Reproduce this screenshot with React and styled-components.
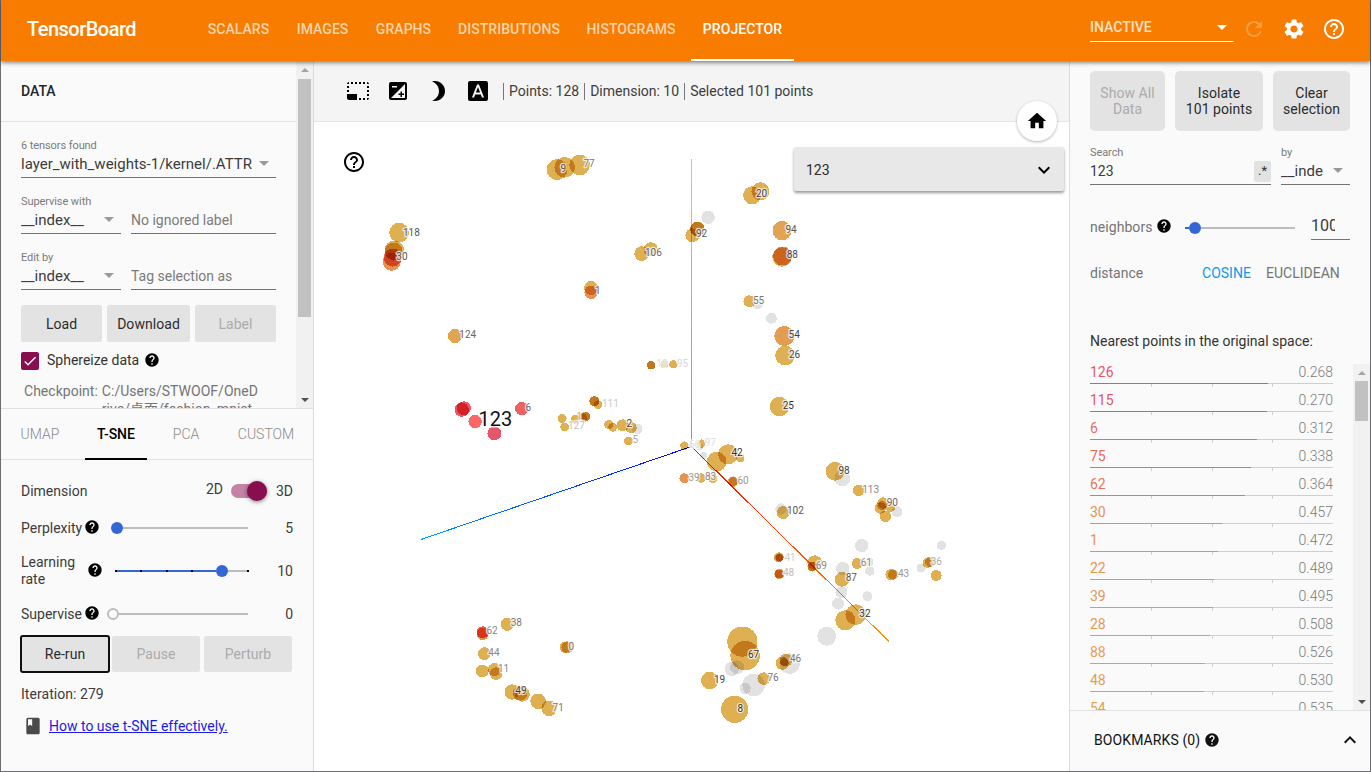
import React from 'react';
import styled, { createGlobalStyle } from 'styled-components';
import {
  MdPhotoSizeSelectSmall, MdExposure, MdBrightness3, MdFontDownload, MdHelp, MdHelpOutline,
  MdSettings, MdRefresh, MdExpandMore, MdExpandLess, MdBook, MdHome, MdCheck,
} from 'react-icons/md';

const GlobalStyle = createGlobalStyle`
  * { box-sizing: border-box; }
  body { margin: 0; overflow: hidden; background: #fff; font-family: Roboto, "Noto Sans CJK SC", sans-serif; font-size: 14px; color: #3c3c3c; }
  svg { display: block; flex: none; }
`;

const Window = styled.div`
  width: 1371px; height: 772px; display: flex; flex-direction: column;
  border: solid #6e6e72; border-width: 0 1px 1px 1px;
`;
const Header = styled.header`
  height: 61px; flex: none; background: #f77c00; display: flex; position: relative; z-index: 5;
  box-shadow: 0 2px 4px rgba(0,0,0,.45); color: #fff; padding-left: 26px;
`;
const Brand = styled.div`
  width: 167px; font-size: 20px; font-weight: 500; line-height: 59px; letter-spacing: -0.52px;
`;
const Nav = styled.nav`display: flex; flex: 1;`;
const NavTab = styled.div`
  width: ${p => p.$w}px; text-align: center; line-height: 59px; font-weight: 500; white-space: nowrap;
  letter-spacing: 0.05px; margin-left: ${p => (p.$active ? 2 : 0)}px;
  color: ${p => (p.$active ? '#fff' : '#fdd5ae')};
  border-bottom: 2px solid ${p => (p.$active ? '#fff' : 'transparent')};
`;
const HeaderRight = styled.div`display: flex; width: 280px; flex: none; padding-top: 16px;`;
const ReloadSelect = styled.div`
  width: 144px; height: 26px; border-bottom: 1px solid #fff; display: flex; justify-content: space-between;
  align-items: center; font-weight: 500; padding: 0 7px 3px 0; color: #ffe1c2; margin-right: 8px;
`;
const Caret = styled.i`
  width: 0; height: 0; border: 5px solid transparent; border-bottom: 0; flex: none;
  border-top-color: ${p => p.$c || '#999'};
`;
const HeaderIcon = styled.div`
  margin: 1px 16px 0 0; height: 24px; opacity: ${p => (p.$dim ? 0.25 : 1)};
`;

const Body = styled.div`flex: 1; display: flex; min-height: 0;`;
const LeftPane = styled.aside`
  width: 313px; flex: none; background: #fafafa; border-right: 1px solid #dcdcdc; display: flex; flex-direction: column;
`;
const DataArea = styled.div`height: 348px; flex: none; display: flex; border-bottom: 1px solid #e0e0e0; overflow: hidden;`;
const DataContent = styled.div`flex: 1; overflow: hidden;`;
const DataTitle = styled.div`
  height: 61px; border-bottom: 1px solid #e0e0e0; line-height: 61px; padding-left: 20px; font-weight: 500; color: #262626;
`;
const DataForm = styled.div`padding: 17px 20px 0 20px;`;
const FieldLabel = styled.div`font-size: 11px; line-height: 14px; height: 14px; color: #7a7a7a; letter-spacing: -0.08px;`;
const Field = styled.div`
  height: 25px; border-bottom: 1px solid #737373; display: flex; align-items: center; justify-content: space-between;
  font-size: ${p => p.$fs || 15}px; white-space: nowrap; overflow: hidden; padding: 0 ${p => p.$pr ?? 7}px 3px 0;
  width: ${p => p.$w}px; color: ${p => (p.$muted ? '#7b7b7b' : '#3c3c3c')}; margin-bottom: ${p => p.$mb || 0}px;
`;
const FieldRow = styled.div`display: flex; gap: 10px; align-items: flex-end; margin-bottom: ${p => p.$mb}px;`;
const ButtonRow = styled.div`display: flex; gap: ${p => p.$gap}px; margin-top: ${p => p.$mt || 0}px;`;
const GreyButton = styled.div`
  background: #e3e3e3; border-radius: ${p => p.$r || 2}px; width: ${p => p.$w}px; height: ${p => p.$h}px; flex: none;
  display: flex; align-items: center; justify-content: center; text-align: center; line-height: 16px; white-space: pre-line;
  letter-spacing: 0.05px; color: ${p => (p.$off ? '#ababab' : '#2c2c2c')};
  outline: ${p => (p.$focus ? '2px solid #101010' : 'none')}; outline-offset: -1px; margin-right: ${p => (p.$focus ? -1 : 0)}px;
`;
const CheckRow = styled.div`display: flex; align-items: center; margin-top: 9px; height: 20px; color: #333;`;
const CheckBox = styled.div`
  width: 18px; height: 18px; border-radius: 2px; background: #880e4f; color: #fff; margin-right: 8px;
  display: flex; align-items: center; justify-content: center;
`;
const CheckLabel = styled.span`margin-right: 5px; line-height: 18px; padding-bottom: 2px;`;
const Checkpoint = styled.div`
  display: flex; color: #757575; margin: 11px 0 0 3px; line-height: 18px; gap: 4px; letter-spacing: 0.02px;
`;

const ScrollTrack = styled.div`
  width: 17px; flex: none; background: #f1f1f1; display: flex; flex-direction: column; align-items: center;
  padding: 7px 0 6px;
`;
const Arrow = styled.i`
  width: 0; height: 0; border: 4px solid transparent;
  ${p => (p.$down ? 'border-bottom: 0; border-top-color: #505050; margin-top: auto;' : 'border-top: 0; border-bottom-color: #a3a3a3;')}
`;
const Thumb = styled.div`width: 13px; height: ${p => p.$h}px; background: #c1c1c1; margin-top: ${p => p.$mt}px;`;

const Tabs = styled.div`height: 51px; flex: none; display: flex; border-bottom: 1px solid #e0e0e0;`;
const Tab = styled.div`
  width: ${p => p.$w}px; height: 51px; text-align: center; line-height: 51px; margin-left: ${p => p.$ml || 0}px;
  font-weight: ${p => (p.$active ? 500 : 300)}; color: ${p => (p.$active ? '#000' : '#8a8a8a')};
  border-bottom: 2px solid ${p => (p.$active ? '#000' : 'transparent')};
`;
const Settings = styled.div`padding: 10px 20px 0 20px;`;
const SettingRow = styled.div`
  display: flex; align-items: center; height: ${p => p.$h}px;
`;
const SettingName = styled.div`width: ${p => p.$w}px; line-height: 17px; white-space: nowrap; flex: none;`;
const HelpDot = styled.span`color: #000; margin: ${p => p.$m || '0'}; display: block;`;
const SettingValue = styled.div`width: 45px; text-align: right;`;
const TwoD = styled.span`padding-bottom: 5px;`;
const Slider = styled.div`
  flex: none; width: ${p => p.$w}px; height: 12px; margin: 0 0 ${p => p.$mb || 0}px ${p => p.$ml}px; display: flex; align-items: center;
`;
const Rail = styled.div`
  height: 2px; width: ${p => p.$w}px; display: flex; justify-content: space-between;
  background: ${p => (p.$on ? '#3367d6' : '#bdbdbd')};
`;
const Tick = styled.i`width: 2px; height: 2px; background: #000;`;
const Knob = styled.div`
  width: 12px; height: 12px; border-radius: 50%; flex: none;
  background: ${p => (p.$empty ? '#fafafa' : '#3367d6')}; border: ${p => (p.$empty ? '2px solid #bdbdbd' : '0')};
`;
const Toggle = styled.div`
  width: 36px; height: 14px; border-radius: 7px; background: #c583a5; margin: 0 9px 0 8px;
  display: flex; align-items: center; justify-content: flex-end;
`;
const ToggleKnob = styled.div`
  width: 20px; height: 20px; border-radius: 50%; background: #880e4f; box-shadow: 0 1px 4px rgba(0,0,0,.5); flex: none;
`;
const Iteration = styled.div`margin-top: 14px; line-height: 16px; letter-spacing: 0.05px;`;
const HowTo = styled.div`
  display: flex; align-items: center; margin: 14px 0 0 2px; gap: 6px; color: #4a4a4a;
  a { color: #1a1ae8; text-decoration: underline; }
`;

const Center = styled.main`width: 755px; flex: none; display: flex; flex-direction: column; position: relative;`;
const Toolbar = styled.div`
  height: 61px; flex: none; background: #f4f4f4; border-bottom: 1px solid #e6e6e6; display: flex; align-items: center;
  padding-left: 32px; color: #000;
`;
const ToolIcon = styled.div`margin-right: ${p => (p.$last ? 13 : 16)}px;`;
const Stat = styled.div`
  border-left: 1px solid #777; height: 17px; line-height: 17px; padding: 0 5px; color: #3c3c3c; white-space: nowrap;
`;
const Plot = styled.div`flex: 1; min-height: 0; background: #fff;`;
const HomeButton = styled.div`
  position: absolute; left: 703px; top: 40px; width: 40px; height: 40px; border-radius: 50%; background: #fff; color: #000;
  display: flex; align-items: center; justify-content: center; box-shadow: 0 1px 3px rgba(0,0,0,.3);
`;
const PlotHelp = styled.div`position: absolute; left: 28px; top: 89px; color: #000;`;
const MetadataCard = styled.div`
  position: absolute; left: 480px; top: 86px; width: 270px; height: 44px; background: #e8e8e8; border-radius: 2px;
  box-shadow: 0 2px 3px rgba(0,0,0,.4); display: flex; align-items: center; justify-content: space-between; padding: 2px 8px 0 12px;
  color: #2c2c2c;
`;

const RightPane = styled.aside`
  flex: 1; background: #fafafa; border-left: 1px solid #dcdcdc; display: flex; flex-direction: column; min-width: 0;
`;
const Inspector = styled.div`height: 272px; flex: none; padding: 10px 20px 0 20px;`;
const SearchRow = styled.div`display: flex; gap: 10px; margin-top: 15px;`;
const RegexButton = styled.div`
  width: 17px; height: 21px; background: #e2e2e2; border-radius: 2px; text-align: center; line-height: 20px; font-size: 13px; color: #333; margin-bottom: -2px;
`;
const NeighborRow = styled.div`display: flex; align-items: flex-end; margin-top: 29px; height: 26px; color: #757575;`;
const NeighborName = styled.div`width: 66px; line-height: 25px; letter-spacing: 0.06px;`;
const NeighborInput = styled.div`
  width: 39px; margin-left: 16px; height: 26px; border-bottom: 1px solid #737373; font-size: 16px; line-height: 24px; color: #3c3c3c;
`;
const Clip = styled.div`width: 24px; overflow: hidden;`;
const DistanceRow = styled.div`display: flex; margin-top: 25px; line-height: 17px; color: #757575;`;
const DistanceName = styled.div`width: 112px; flex: none;`;
const Metric = styled.div`color: ${p => (p.$on ? '#0a9af5' : '#757575')}; margin-right: ${p => (p.$on ? 15 : 0)}px; letter-spacing: 0.02px;`;
const NearestTitle = styled.div`height: 31px; flex: none; padding-left: 20px; line-height: 17px; color: #333;`;
const NearestArea = styled.div`height: 347px; flex: none; display: flex; border-bottom: 1px solid #e0e0e0;`;
const NearestList = styled.div`width: 283px; height: 346px; overflow: hidden; padding: 0 20px;`;
const NearestItem = styled.div`height: 28px;`;
const NearestText = styled.div`display: flex; justify-content: space-between; height: 19px; line-height: 16px; color: ${p => p.$c};`;
const Distance = styled.span`color: #7b7b7b; font-weight: 300; letter-spacing: 0.02px;`;
const NearestBar = styled.div`height: 1px; background: #cfcfcf;`;
const NearestFill = styled.div`height: 1px; background: ${p => p.$c};`;
const NearestTicks = styled.div`display: flex; justify-content: space-between; width: 183px; padding-left: 61px;`;
const NearestTick = styled.i`width: 1px; height: 3px; background: #cfcfcf;`;
const Bookmarks = styled.div`
  flex: 1; display: flex; align-items: center; padding: 0 8px 2px 24px; color: #111;
`;
const BookmarkTitle = styled.span`letter-spacing: 0.1px; margin-right: 4px;`;
const Spacer = styled.div`flex: 1;`;

const Y = '#dfb052', G = '#e2e2e2', O = '#e79252', A = '#e1a552';
// x, y, radius, colour
const points = [
  [556.7, 169.3, 10.4, Y], [564.3, 167, 10.3, Y], [579.3, 164.7, 10.3, Y], [398.7, 232.3, 9.8, Y],
  [394, 250, 9.7, Y], [393.3, 251.3, 9, Y], [392.3, 257.3, 9, '#e8745c'], [391.3, 261.5, 9, O],
  [641.3, 253.3, 7.4, Y], [650.3, 249, 7.1, Y], [590.7, 287.7, 7, Y], [590.7, 292, 6.7, O],
  [751.7, 195, 9, Y], [760, 191, 9, Y], [707.7, 217, 6.7, G], [692, 235, 7, Y], [697, 228.7, 7.3, Y], [697, 228.7, 7.2, Y],
  [781.7, 230.3, 9.6, A], [781.7, 256.7, 9.7, Y], [782.2, 255.7, 9.5, O], [749, 301, 6, Y], [757.3, 303.6, 5.3, G], [771, 318, 5.4, G],
  [784, 335.7, 10, '#e39d52'], [784.7, 355.3, 9.8, Y], [454.7, 335.7, 7.1, A],
  [461.3, 409.3, 7.2, '#e4566a'], [463.5, 408, 7, '#ef5a63'], [474.7, 421.3, 6.7, '#ff6666'], [494, 433, 7, '#e4566a'], [521.3, 408.3, 6.6, '#ee6163'],
  [650.7, 365, 4.2, Y], [650.7, 365, 4.1, Y], [664, 364, 4, Y], [664.5, 364, 3, '#eedfc0'], [673, 364, 4.2, Y],
  [594, 401, 5.1, Y], [594, 401, 5, Y], [597.7, 404.3, 4.3, Y], [561.7, 418.3, 4.5, Y], [564.3, 426.7, 4.4, Y],
  [575, 419, 4.6, Y], [582, 417.7, 4.8, Y], [585.3, 416.3, 4.8, Y], [585.6, 416.3, 4.3, Y], [608.3, 424.3, 4.5, Y], [612.3, 427, 4.4, Y],
  [622.3, 425, 6, Y], [630.7, 427.3, 5.6, Y], [636.7, 428.7, 5.2, G], [628, 440.7, 4.5, Y],
  [684, 445.3, 4.2, Y], [701, 443.3, 4.2, Y], [699.3, 446.7, 3.5, G], [703.3, 455, 3.4, G],
  [716.3, 461.3, 9.8, Y], [727.7, 454, 10, Y], [740, 457.7, 4.2, Y], [684, 478, 5, O], [701, 477.7, 4.7, Y], [712.3, 478, 4.7, Y],
  [732.7, 481.3, 5.2, Y], [732.7, 481.3, 4.6, Y], [779, 406.3, 9.7, Y], [834.7, 471, 9.4, Y], [842, 478, 8, G], [858.3, 490, 5.8, Y],
  [882.7, 502.7, 5.7, Y], [880, 507.7, 5.7, Y], [881.5, 505.3, 4.6, Y], [890, 506.7, 5, Y], [885, 516, 5.8, Y], [896.7, 511.3, 5.4, G],
  [780.7, 508.7, 5.7, G], [782.7, 512.3, 6.4, Y], [778.3, 557, 5, Y], [779, 557.3, 4.2, Y], [779, 557.3, 3.6, O],
  [779, 573.7, 5, Y], [778.6, 573.7, 4.5, '#e3803f'], [814.3, 562.3, 7.3, Y], [812, 566.3, 5, Y], [811.7, 566.3, 4.4, Y],
  [861.3, 545.3, 6.7, G], [842.3, 568.3, 6.7, G], [868.3, 561.7, 4.7, G], [869.3, 570.7, 4.7, G], [841, 592, 6, G], [837.7, 603.3, 6, G],
  [867, 596, 5, G], [941, 545, 4.6, G], [920.7, 567.7, 4.6, G], [841.7, 579, 7.4, Y], [856.7, 563.3, 5.5, Y],
  [890.7, 574.3, 5.7, Y], [892.7, 574.3, 5, Y], [927.3, 562.3, 5.2, Y], [929.7, 561.7, 5, Y], [935.7, 575.3, 5.5, Y],
  [845, 620, 10.1, Y], [855.3, 614.3, 10.3, Y], [507, 624, 6.6, Y], [482.3, 632, 6, '#e8604a'], [482.3, 633.7, 6, O],
  [484, 653.3, 6.4, Y], [482, 670.7, 6.4, Y], [494, 669.3, 6.5, Y], [495.7, 673.3, 6.3, Y],
  [511.7, 691.7, 7.6, Y], [519.7, 693, 7.3, Y], [522, 694, 7.4, Y], [537.7, 701, 7.8, Y], [548.7, 708, 7.8, Y],
  [564.7, 647, 5.6, Y], [567, 647, 6, Y], [742, 641.3, 15.1, Y], [744.7, 655.3, 14.7, Y],
  [731.3, 668.7, 7.2, G], [736.7, 667, 7, G], [753.3, 684.7, 11.3, G], [744.7, 688, 5.6, G], [789.3, 663.3, 10.3, G], [826.3, 636, 9.4, G],
  [763.3, 678.3, 6.3, Y], [781.7, 663, 6.5, Y], [785.7, 659.7, 6.5, Y], [784, 662, 4.2, Y], [709.3, 680.3, 8.7, Y], [734.3, 709, 13.6, Y],
];
// text, left, baseline, colour
const labels = [
  ['9', 560.5, 172, '#555'], ['77', 583.5, 167, '#777'], ['118', 403, 235.5, '#555'], ['30', 396.3, 259.7, '#555'],
  ['106', 645, 255.7, '#666'], ['1', 595, 293.7, '#666'], ['20', 756, 197, '#444'], ['92', 696, 236.5, '#555'],
  ['94', 785.5, 232.9, '#555'], ['88', 786.7, 258, '#444'], ['55', 753, 304, '#777'], ['54', 788.6, 338.2, '#444'],
  ['26', 789, 358, '#444'], ['124', 459.3, 338, '#666'], ['6', 525.4, 411, '#666'], ['10', 656.3, 367, '#ddd'],
  ['95', 677, 367, '#d8d8d8'], ['111', 602, 407, '#c8c8c8'], ['1', 576.5, 420, '#d9a860'], ['127', 568, 429, '#c4c4c4'],
  ['2', 626.6, 427, '#444'], ['5', 632.6, 443, '#aaa'], ['66', 689, 447.5, '#ddd'], ['97', 704.7, 446, '#ddd'],
  ['42', 731.4, 456, '#333'], ['39', 688.5, 481, '#999'], ['83', 705, 480, '#888'], ['60', 737.5, 484.3, '#999'],
  ['25', 782.7, 409, '#333'], ['98', 838.5, 474, '#444'], ['113', 862.2, 493, '#888'], ['90', 886.7, 506, '#666'],
  ['102', 787, 514, '#555'], ['41', 784.4, 560.5, '#ccc'], ['48', 783, 576, '#bbb'], ['69', 815.7, 569, '#888'],
  ['87', 845.7, 581.3, '#555'], ['61', 860.7, 566, '#888'], ['43', 898, 577, '#999'], ['36', 930.7, 565, '#aaa'],
  ['32', 859.3, 617.3, '#333'], ['38', 510.7, 626, '#777'], ['62', 486.4, 634, '#888'], ['44', 488.3, 656, '#888'],
  ['11', 498, 672.3, '#888'], ['49', 515.3, 694, '#444'], ['71', 552.6, 711, '#777'], ['0', 568.4, 650, '#777'],
  ['67', 748, 658, '#333'], ['76', 767.4, 681, '#777'], ['46', 790, 662, '#777'], ['19', 714, 683, '#444'], ['8', 737.6, 712.3, '#333'],
];

// label, distance, bar width, colour
const nearest = [
  ['126', '0.268', 178, '#e4566a'], ['115', '0.270', 177, '#e4566a'], ['6', '0.312', 167, '#ec6a62'], ['75', '0.338', 161, '#ea6a5c'],
  ['62', '0.364', 155, '#e97657'], ['30', '0.457', 132, '#e68f55'], ['1', '0.472', 128, '#e69255'], ['22', '0.489', 124, '#e59655'],
  ['39', '0.495', 123, '#e59755'], ['28', '0.508', 120, '#e49a54'], ['88', '0.526', 115, '#e39d54'], ['48', '0.530', 114, '#e39e54'],
  ['54', '0.535', 113, '#e39f54'],
];

const navTabs = [
  ['SCALARS', 89], ['IMAGES', 79], ['GRAPHS', 83], ['DISTRIBUTIONS', 128], ['HISTOGRAMS', 116], ['PROJECTOR', 103],
];

const Dot = styled.circle`mix-blend-mode: multiply; shape-rendering: crispEdges;`;
const DotLayer = styled.g`isolation: isolate;`;

function ScatterPlot() {
  return (
    <svg width="755" height="649" viewBox="314 122 755 649" fontFamily="Roboto, sans-serif">
      <defs>
        <linearGradient id="ax" gradientUnits="userSpaceOnUse" x1="691" y1="447" x2="889" y2="642"><stop stopColor="#f00" /><stop offset="1" stopColor="#f90" /></linearGradient>
        <linearGradient id="ay" gradientUnits="userSpaceOnUse" x1="691" y1="447" x2="691" y2="159"><stop stopColor="#0f0" /><stop offset="1" stopColor="#9f0" /></linearGradient>
        <linearGradient id="az" gradientUnits="userSpaceOnUse" x1="691" y1="447" x2="421" y2="540"><stop stopColor="#00f" /><stop offset="1" stopColor="#09f" /></linearGradient>
      </defs>
      <DotLayer>
        <rect x="314" y="122" width="755" height="649" fill="#fff" />
        <g shapeRendering="crispEdges">
          <rect x="691" y="159" width="1" height="288" fill="url(#ay)" />
          <path d="M691.5 446.5L889 641.5" stroke="url(#ax)" />
          <path d="M691.5 446.5L421 539.5" stroke="url(#az)" />
        </g>
        {points.map(([x, y, r, c], i) => (
          <Dot key={i} cx={x + 0.4} cy={y + 0.3} r={r} fill={c} />
        ))}
      </DotLayer>
      {labels.map(([t, x, y, c], i) => (
        <text key={i} x={x} y={y} fontSize="10" fill={c} stroke="#fff" strokeOpacity=".75" strokeWidth="2.4" strokeLinejoin="round" paintOrder="stroke">{t}</text>
      ))}
      <text x="478.6" y="426.3" fontSize="20" fill="#111" stroke="#fff" strokeOpacity=".8" strokeWidth="3" paintOrder="stroke">123</text>
    </svg>
  );
}

export default function App() {
  return (
    <Window>
      <GlobalStyle />
      <Header>
        <Brand>TensorBoard</Brand>
        <Nav>
          {navTabs.map(([t, w], i) => <NavTab key={t} $w={w} $active={i === 5}>{t}</NavTab>)}
        </Nav>
        <HeaderRight>
          <ReloadSelect>INACTIVE<Caret $c="#fff" /></ReloadSelect>
          <HeaderIcon $dim><MdRefresh size={24} /></HeaderIcon>
          <HeaderIcon><MdSettings size={24} /></HeaderIcon>
          <HeaderIcon><MdHelpOutline size={24} /></HeaderIcon>
        </HeaderRight>
      </Header>
      <Body>
        <LeftPane>
          <DataArea>
            <DataContent>
              <DataTitle>DATA</DataTitle>
              <DataForm>
                <FieldLabel>6 tensors found</FieldLabel>
                <Field $w={255} $mb={17}>layer_with_weights-1/kernel/.ATTR<Caret /></Field>
                <FieldRow $mb={17}>
                  <div><FieldLabel>Supervise with</FieldLabel><Field $w={100}>__index__<Caret /></Field></div>
                  <Field $w={145} $fs={14} $muted>No ignored label</Field>
                </FieldRow>
                <FieldRow $mb={15}>
                  <div><FieldLabel>Edit by</FieldLabel><Field $w={100}>__index__<Caret /></Field></div>
                  <Field $w={145} $fs={14} $muted>Tag selection as</Field>
                </FieldRow>
                <ButtonRow $gap={5}>
                  <GreyButton $w={81} $h={37}>Load</GreyButton>
                  <GreyButton $w={83} $h={37}>Download</GreyButton>
                  <GreyButton $w={81} $h={37} $off>Label</GreyButton>
                </ButtonRow>
                <CheckRow>
                  <CheckBox><MdCheck size={16} /></CheckBox>
                  <CheckLabel>Sphereize data</CheckLabel>
                  <HelpDot $m="0 0 2px"><MdHelp size={16} /></HelpDot>
                </CheckRow>
                <Checkpoint><span>Checkpoint:</span><span>C:/Users/STWOOF/OneD<br />rive/桌面/fashion_mnist</span></Checkpoint>
              </DataForm>
            </DataContent>
            <ScrollTrack><Arrow /><Thumb $h={238} $mt={7} /><Arrow $down /></ScrollTrack>
          </DataArea>
          <Tabs>
            <Tab $w={78}>UMAP</Tab>
            <Tab $w={62} $ml={6} $active>T-SNE</Tab>
            <Tab $w={78}>PCA</Tab>
            <Tab $w={80} $ml={1}>CUSTOM</Tab>
          </Tabs>
          <Settings>
            <SettingRow $h={42}>
              <SettingName $w={185}>Dimension</SettingName>
              <TwoD>2D</TwoD><Toggle><ToggleKnob /></Toggle><span>3D</span>
            </SettingRow>
            <SettingRow $h={32}>
              <SettingName $w={63}>Perplexity</SettingName>
              <HelpDot $m="0 0 3px"><MdHelp size={16} /></HelpDot>
              <Slider $w={137} $ml={11}><Knob /><Rail $w={125} /></Slider>
              <SettingValue>5</SettingValue>
            </SettingRow>
            <SettingRow $h={54}>
              <SettingName $w={66}>Learning<br />rate</SettingName>
              <HelpDot $m="0 0 3px"><MdHelp size={16} /></HelpDot>
              <Slider $w={134} $ml={12}>
                <Rail $w={101} $on><Tick /><Tick /><Tick /><Tick /><i /></Rail><Knob />
                <Rail $w={21}><i /><Tick /></Rail>
              </Slider>
              <SettingValue>10</SettingValue>
            </SettingRow>
            <SettingRow $h={32}>
              <SettingName $w={63}>Supervise</SettingName>
              <HelpDot $m="0 0 3px"><MdHelp size={16} /></HelpDot>
              <Slider $w={141} $ml={7}><Knob $empty /><Rail $w={129} /></Slider>
              <SettingValue>0</SettingValue>
            </SettingRow>
            <ButtonRow $gap={4} $mt={6}>
              <GreyButton $w={88} $h={36} $focus>Re-run</GreyButton>
              <GreyButton $w={88} $h={36} $off>Pause</GreyButton>
              <GreyButton $w={88} $h={36} $off>Perturb</GreyButton>
            </ButtonRow>
            <Iteration>Iteration: 279</Iteration>
            <HowTo><MdBook size={20} /><a>How to use t-SNE effectively.</a></HowTo>
          </Settings>
        </LeftPane>
        <Center>
          <Toolbar>
            <ToolIcon><MdPhotoSizeSelectSmall size={24} /></ToolIcon>
            <ToolIcon><MdExposure size={24} /></ToolIcon>
            <ToolIcon><MdBrightness3 size={24} /></ToolIcon>
            <ToolIcon $last><MdFontDownload size={24} /></ToolIcon>
            <Stat>Points: 128</Stat><Stat>Dimension: 10</Stat><Stat>Selected 101 points</Stat>
          </Toolbar>
          <Plot><ScatterPlot /></Plot>
          <HomeButton><MdHome size={22} /></HomeButton>
          <PlotHelp><MdHelpOutline size={24} /></PlotHelp>
          <MetadataCard>123<MdExpandMore size={24} color="#000" /></MetadataCard>
        </Center>
        <RightPane>
          <Inspector>
            <ButtonRow $gap={10}>
              <GreyButton $w={75} $h={60} $r={5} $off>{'Show All\nData'}</GreyButton>
              <GreyButton $w={88} $h={60} $r={5}>{'Isolate\n101 points'}</GreyButton>
              <GreyButton $w={77} $h={60} $r={5}>{'Clear\nselection'}</GreyButton>
            </ButtonRow>
            <SearchRow>
              <div><FieldLabel>Search</FieldLabel><Field $w={181} $fs={14} $pr={0}>123<RegexButton>.*</RegexButton></Field></div>
              <div><FieldLabel>by</FieldLabel><Field $w={69}>__inde<Caret /></Field></div>
            </SearchRow>
            <NeighborRow>
              <NeighborName>neighbors</NeighborName>
              <HelpDot $m="0 0 6px"><MdHelp size={16} /></HelpDot>
              <Slider $w={110} $ml={13} $mb={6}><Rail $w={4} $on /><Knob /><Rail $w={94} /></Slider>
              <NeighborInput><Clip>100</Clip></NeighborInput>
            </NeighborRow>
            <DistanceRow>
              <DistanceName>distance</DistanceName><Metric $on>COSINE</Metric><Metric>EUCLIDEAN</Metric>
            </DistanceRow>
          </Inspector>
          <NearestTitle>Nearest points in the original space:</NearestTitle>
          <NearestArea>
            <NearestList>
              {nearest.map(([n, d, w, c]) => (
                <NearestItem key={n}>
                  <NearestText $c={c}>{n}<Distance>{d}</Distance></NearestText>
                  <NearestBar><NearestFill $c={c} style={{ width: w }} /></NearestBar>
                  <NearestTicks><NearestTick /><NearestTick /><NearestTick /></NearestTicks>
                </NearestItem>
              ))}
            </NearestList>
            <ScrollTrack><Arrow /><Thumb $h={40} $mt={6} /><Arrow $down /></ScrollTrack>
          </NearestArea>
          <Bookmarks>
            <BookmarkTitle>BOOKMARKS (0)</BookmarkTitle><MdHelp size={16} />
            <Spacer />
            <MdExpandLess size={24} />
          </Bookmarks>
        </RightPane>
      </Body>
    </Window>
  );
}
